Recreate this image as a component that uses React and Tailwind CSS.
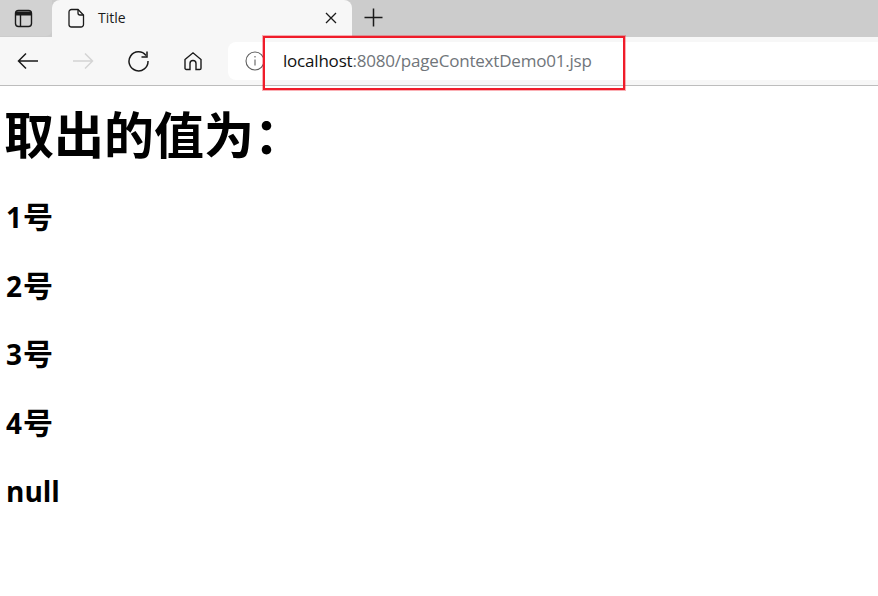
import React from "react";

const cjk = { fontFamily: '"Open Sans","Noto Sans CJK SC",sans-serif' };

function Line({ n }) {
  return (
    <h3 className="text-[28px] font-bold leading-[40px] text-black">
      {n}
      <span className="text-[30px] ml-[1px]">号</span>
    </h3>
  );
}

export default function App() {
  return (
    <div className="relative w-[878px] h-[596px] bg-white overflow-hidden" style={cjk}>
      {/* tab strip */}
      <div className="flex h-[37px] bg-[#cccccc]">
        <div className="flex w-[52px] h-[36px] items-center pl-[14px] bg-[#d2d2d2] rounded-br-md">
          <svg width="19" height="19" viewBox="0 0 19 19" fill="none" stroke="#1a1a1a" strokeWidth="1.4">
            <rect x="1.5" y="1.500" width="16" height="16" rx="3" />
            <path d="M2 2.500h15v4H2z" fill="#1a1a1a" stroke="none" />
            <path d="M6.500 6v11" />
          </svg>
        </div>
        <div className="flex w-[300px] h-[37px] items-center bg-[#f7f7f7] rounded-t-lg pl-[16px] pr-[14px] pb-[2px]">
          <svg width="17" height="20" viewBox="0 0 17 20" fill="none" stroke="#1a1a1a" strokeWidth="1.3">
            <path d="M3.500 1.500h6.500l5.500 5.500v9.500a2.500 2.500 0 0 1-2.500 2.500H3.500A2.500 2.500 0 0 1 1 16.500V4a2.500 2.500 0 0 1 2.500-2.500z" />
            <path d="M10 1.500v3.500a2 2 0 0 0 2 2h3.500" />
          </svg>
          <span className="ml-[13px] flex-1 text-[14px] text-[#1a1a1a]">Title</span>
          <svg className="-ml-[1px] mr-[1px]" width="12" height="12" viewBox="0 0 12 12" stroke="#1a1a1a" strokeWidth="1.300">
            <path d="M1 1l10 10M11 1L1 11" />
          </svg>
        </div>
        <div className="flex items-center pl-[12px] pb-[3px]">
          <svg width="19" height="19" viewBox="0 0 19 19" stroke="#1a1a1a" strokeWidth="1.500">
            <path d="M9.500 0.500v18M0.500 9.500h18" />
          </svg>
        </div>
      </div>
      {/* toolbar */}
      <div className="flex h-[49px] items-center bg-[#f7f7f7] border-b border-[#bdbdbd] pb-[1px]">
        <div className="flex w-[228px] h-full items-center">
          <svg className="ml-[17px]" width="22" height="18" viewBox="0 0 22 18" fill="none" stroke="#1a1a1a" strokeWidth="1.500">
            <path d="M21 9H1.500M9 1.500L1.500 9 9 16.500" />
          </svg>
          <svg className="ml-[33px]" width="22" height="18" viewBox="0 0 22 18" fill="none" stroke="#d4d4d4" strokeWidth="1.500">
            <path d="M1 9h19.500M13 1.500L20.500 9 13 16.500" />
          </svg>
          <svg className="ml-[33px]" width="22" height="22" viewBox="0 0 22 22" fill="none" stroke="#1a1a1a" strokeWidth="1.500">
            <path d="M20 1.500v5.500h-5.500" />
            <path d="M19 5.500A9.500 9.500 0 1 0 21 11" />
          </svg>
          <svg className="ml-[34px]" width="20" height="20" viewBox="0 0 20 20" fill="none" stroke="#1a1a1a" strokeWidth="1.400">
            <path d="M2 8.500L10 1.800l8 6.700v8.700a1.300 1.300 0 0 1-1.300 1.300H13v-6a3 3 0 0 0-6 0v6H3.300A1.300 1.300 0 0 1 2 17.200z" />
          </svg>
        </div>
        <div className="flex flex-1 h-[38px] items-center bg-white rounded-l-lg pl-[17px]">
          <svg width="20" height="20" viewBox="0 0 20 20" fill="none" stroke="#5f5f5f" strokeWidth="1.100">
            <circle cx="10" cy="10" r="9" />
            <path d="M10 8.500v6" />
            <path d="M10 5v1.500" />
          </svg>
          <span className="ml-[18px] text-[17px] tracking-[-0.2px]">
            <span className="text-[#111111]">localhost</span>
            <span className="text-[#70757a]">:8080/pageContextDemo01.jsp</span>
          </span>
        </div>
      </div>
      {/* page */}
      <div className="px-[6px]">
        <h1 className="text-[50px] font-bold leading-[67px] text-black -ml-[2px] mt-[16px] mb-[28px]">取出的值为：</h1>
        <div className="flex flex-col gap-[28.500px]">
          <Line n="1" />
          <Line n="2" />
          <Line n="3" />
          <Line n="4" />
          <h3 className="text-[28px] font-bold leading-[40px] text-black">null</h3>
        </div>
      </div>
      {/* annotation */}
      <div className="absolute left-[263px] top-[36px] w-[362px] h-[54px] border-2 border-[#f01c2a] shadow-[0_0_0_1px_rgba(240,28,42,0.35)]" />
    </div>
  );
}
